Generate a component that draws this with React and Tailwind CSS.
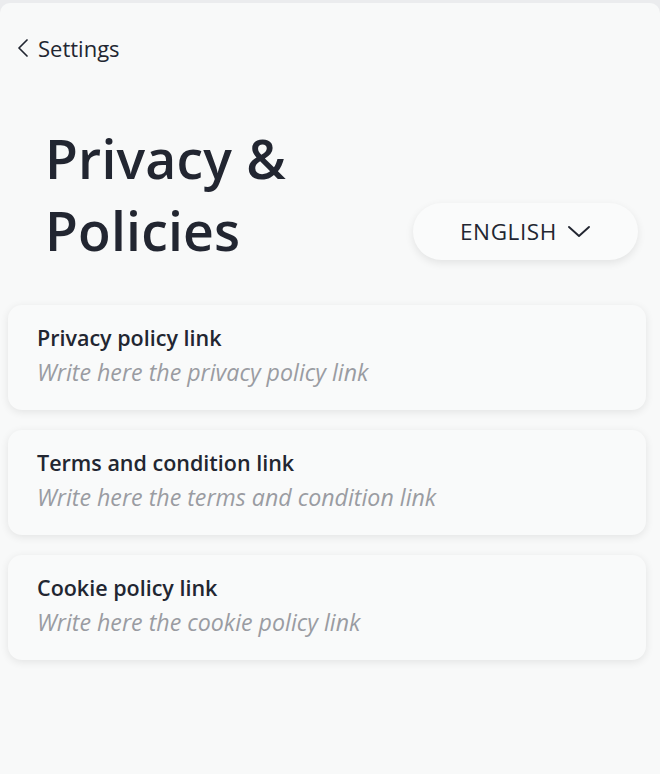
const fields = [
    { label: 'Privacy policy link', placeholder: 'Write here the privacy policy link' },
    { label: 'Terms and condition link', placeholder: 'Write here the terms and condition link' },
    { label: 'Cookie policy link', placeholder: 'Write here the cookie policy link' },
];

export default function App() {
    return (
        <div className="min-h-screen bg-[#ebecee] pt-[3px] font-['Open_Sans',sans-serif] text-[#222631]">
            <div className="min-h-[771px] rounded-t-[10px] bg-[#f8f9f9] pb-10">
                {/* back link */}
                <div className="flex items-center gap-[10px] pl-[17px] pt-[31px]">
                    <svg width="11" height="18" viewBox="0 0 11 18" fill="none" stroke="currentColor" strokeWidth="1.7" strokeLinecap="round" strokeLinejoin="round">
                        <path d="M10 1 L2 9 L10 17" />
                    </svg>
                    <span className="text-[22px] leading-[28px]">Settings</span>
                </div>

                {/* header */}
                <div className="mt-[61px] flex items-end justify-between pl-[45px] pr-[22px]">
                    <h1 className="text-[53.5px] font-semibold leading-[72px] tracking-[0.2px]">
                        Privacy &amp;
                        <br />
                        Policies
                    </h1>
                    <button className="mb-[7px] flex h-[57px] w-[225px] items-center justify-center gap-[10px] rounded-full bg-[#fafbfb] shadow-[0_3px_8px_rgba(0,0,0,0.09)]">
                        <span className="text-[22.5px] font-medium tracking-[0.6px]">ENGLISH</span>
                        <svg width="24" height="14" viewBox="0 0 24 14" fill="none" stroke="currentColor" strokeWidth="1.9" strokeLinecap="round" strokeLinejoin="round">
                            <path d="M2 2 L12 11 L22 2" />
                        </svg>
                    </button>
                </div>

                {/* fields */}
                <div className="mt-[38px] flex flex-col gap-[20px] pl-[8px] pr-[14px]">
                    {fields.map((f) => (
                        <div
                            key={f.label}
                            className="flex h-[105px] flex-col justify-center gap-[6px] rounded-[14px] bg-[#f9fafa] px-[29px] pb-[6px] shadow-[0_2px_8px_rgba(0,0,0,0.09)]"
                        >
                            <span className="text-[21.5px] font-semibold leading-[29px]">{f.label}</span>
                            <input
                                className="bg-transparent text-[23.2px] italic leading-[29px] outline-none placeholder:text-[#9a9ca2]"
                                placeholder={f.placeholder}
                            />
                        </div>
                    ))}
                </div>
            </div>
        </div>
    );
}
